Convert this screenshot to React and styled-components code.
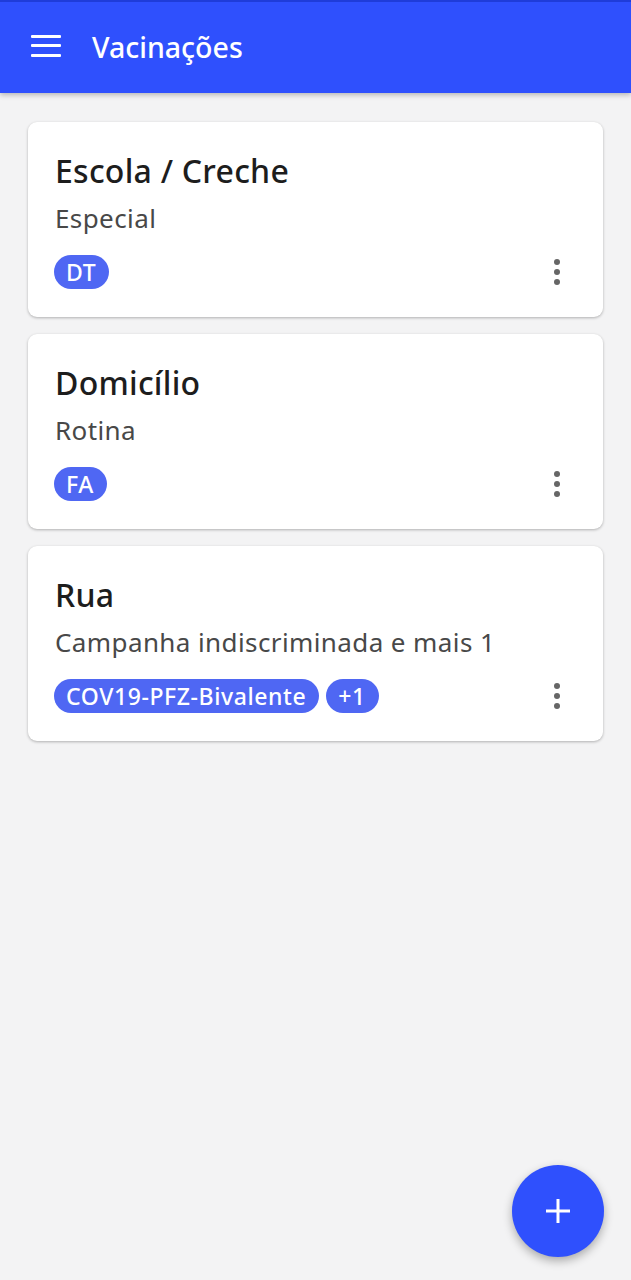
import React from 'react';
import styled, { createGlobalStyle } from 'styled-components';

const GlobalStyle = createGlobalStyle`
    html, body {
        margin: 0;
        padding: 0;
        background: #f3f3f4;
    }
    body {
        font-family: 'Noto Sans', 'Open Sans', sans-serif;
        color: #1f1f1f;
    }
`;

const Page = styled.div`
    min-height: 1280px;
    display: flex;
    flex-direction: column;
    position: relative;
`;

const Toolbar = styled.header`
    height: 91px;
    border-top: 2px solid #1f3cd9;
    background: #2f50fd;
    display: flex;
    align-items: center;
    padding: 0 0 0 31px;
    gap: 31px;
    color: #fff;
    box-shadow: 0 2px 5px rgba(0, 0, 0, 0.25);
`;

const MenuButton = styled.div`
    width: 30px;
    height: 22px;
    display: flex;
    flex-direction: column;
    justify-content: space-between;
    margin-top: -4px;
    span {
        height: 3px;
        background: #fff;
        border-radius: 1px;
    }
`;

const Title = styled.h1`
    margin: 0 0 2px;
    font-size: 28.5px;
    font-weight: 500;
`;

const List = styled.main`
    display: flex;
    flex-direction: column;
    gap: 17px;
    padding: 29px 28px;
`;

const Card = styled.div`
    background: #fff;
    border-radius: 9px;
    box-shadow: 0 1px 3px rgba(0, 0, 0, 0.28);
    padding: 29px 27px 0 27px;
    height: 195px;
    box-sizing: border-box;
    display: flex;
    flex-direction: column;
`;

const CardTitle = styled.div`
    font-size: 32px;
    font-weight: 500;
    line-height: 40px;
    color: #1d1d1d;
    letter-spacing: 0.25px;
`;

const CardSubtitle = styled.div`
    font-size: 26px;
    line-height: 32px;
    color: #484848;
    margin-top: 11px;
    letter-spacing: 0.4px;
`;

const Footer = styled.div`
    display: flex;
    align-items: center;
    justify-content: space-between;
    margin-top: 21px;
`;

const Chips = styled.div`
    display: flex;
    gap: 7px;
    margin-left: -1px;
`;

const Chip = styled.span`
    background: #4f67f3;
    color: #fff;
    font-size: 23px;
    font-weight: 500;
    height: 34px;
    line-height: 34px;
    padding: 0 13px 0 12px;
    border-radius: 17px;
    letter-spacing: 0.6px;
`;

const MoreButton = styled.div`
    display: flex;
    flex-direction: column;
    gap: 4px;
    margin-right: 16px;
    span {
        width: 6px;
        height: 6px;
        border-radius: 50%;
        background: #666;
    }
`;

const Fab = styled.button`
    position: absolute;
    right: 27px;
    bottom: 23px;
    width: 92px;
    height: 92px;
    border-radius: 50%;
    border: none;
    background: #2f50fd;
    box-shadow: 0 4px 10px rgba(0, 0, 0, 0.3);
    display: flex;
    align-items: center;
    justify-content: center;
    padding: 0;
`;

const items = [
    { title: 'Escola / Creche', subtitle: 'Especial', chips: ['DT'] },
    { title: 'Domicílio', subtitle: 'Rotina', chips: ['FA'] },
    { title: 'Rua', subtitle: 'Campanha indiscriminada e mais 1', chips: ['COV19-PFZ-Bivalente', '+1'] }
];

export default function App() {
    return (
        <Page>
            <GlobalStyle />
            <Toolbar>
                <MenuButton>
                    <span />
                    <span />
                    <span />
                </MenuButton>
                <Title>Vacinações</Title>
            </Toolbar>
            <List>
                {items.map(item => (
                    <Card key={item.title}>
                        <CardTitle>{item.title}</CardTitle>
                        <CardSubtitle>{item.subtitle}</CardSubtitle>
                        <Footer>
                            <Chips>
                                {item.chips.map(c => (
                                    <Chip key={c}>{c}</Chip>
                                ))}
                            </Chips>
                            <MoreButton>
                                <span />
                                <span />
                                <span />
                            </MoreButton>
                        </Footer>
                    </Card>
                ))}
            </List>
            <Fab aria-label="Adicionar">
                <svg width="26" height="26" viewBox="0 0 26 26">
                    <path d="M13 1v24M1 13h24" stroke="#fff" strokeWidth="3" />
                </svg>
            </Fab>
        </Page>
    );
}
